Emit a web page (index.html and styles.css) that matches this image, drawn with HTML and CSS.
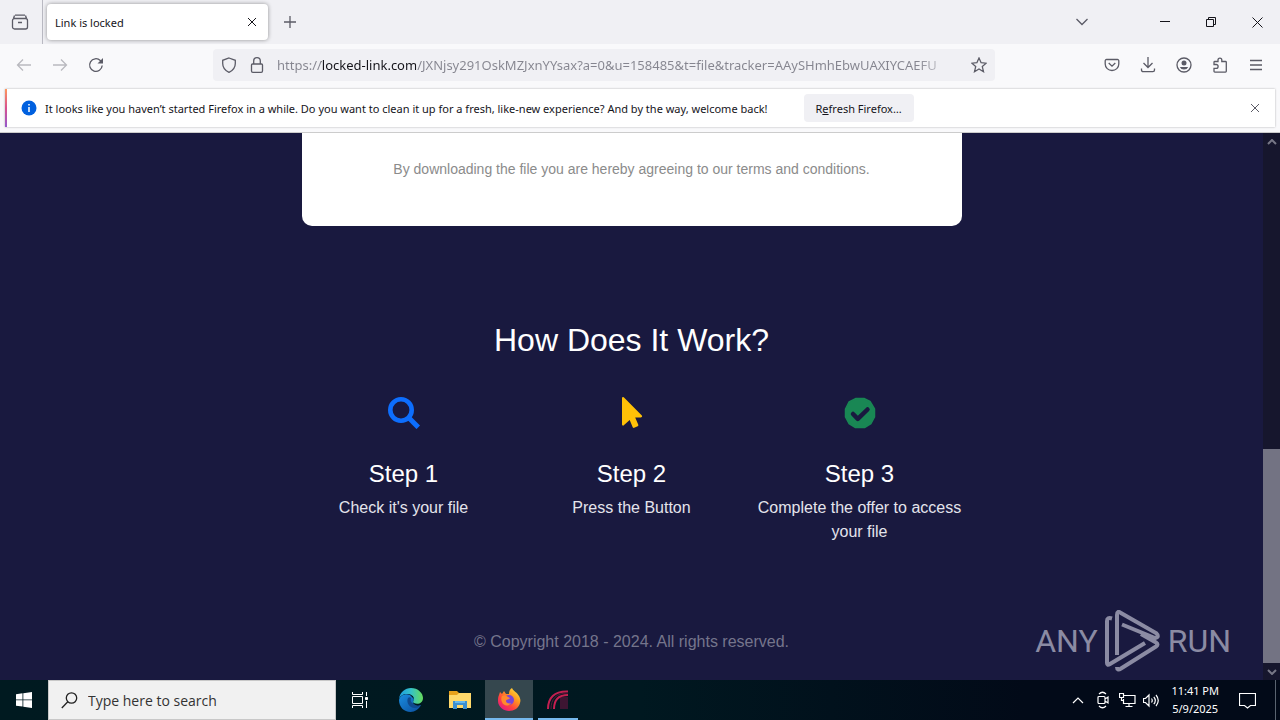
FILE: index.html
```html
<!DOCTYPE html>
<html lang="en">
<head>
  <meta charset="UTF-8">
  <meta name="viewport" content="width=device-width, initial-scale=1.0">
  <title>Link is locked</title>
  <link rel="stylesheet" href="styles.css">
</head>
<body>
  <header class="tabs">
    <button class="icon-btn view-btn" aria-label="Firefox View">
      <svg width="18" height="18" viewBox="0 0 18 18"><path d="M4 2.2h10M3.5 5.5h11a2 2 0 0 1 2 2v6.500a2 2 0 0 1-2 2h-11a2 2 0 0 1-2-2V7.500a2 2 0 0 1 2-2zM2.500 5.500l1-3M15.500 5.500l-1-3M7 9.500h4"/></svg>
    </button>
    <div class="tab">
      <span>Link is locked</span>
      <button class="icon-btn tab-close" aria-label="Close tab">
        <svg width="10" height="10" viewBox="0 0 10 10"><path d="M1 1l8 8M9 1L1 9"/></svg>
      </button>
    </div>
    <button class="icon-btn" aria-label="New tab">
      <svg width="14" height="14" viewBox="0 0 14 14"><path d="M7 1v12M1 7h12"/></svg>
    </button>
    <div class="window-btns">
      <button class="icon-btn all-tabs" aria-label="List all tabs">
        <svg width="14" height="8" viewBox="0 0 14 8"><path d="M1.500 1L7 6.500 12.500 1"/></svg>
      </button>
      <button class="icon-btn win" aria-label="Minimize">
        <svg width="10" height="10" viewBox="0 0 10 10"><path d="M0 4.500h10"/></svg>
      </button>
      <button class="icon-btn win" aria-label="Restore">
        <svg width="10" height="10" viewBox="0 0 10 10"><path d="M.5 2.500h7v7h-7zM2.500 2.500v-2h7v7h-2"/></svg>
      </button>
      <button class="icon-btn win" aria-label="Close">
        <svg width="11" height="11" viewBox="0 0 11 11"><path d="M.5.5l10 10M10.500.5l-10 10"/></svg>
      </button>
    </div>
  </header>

  <nav class="toolbar">
    <div class="nav-btns">
      <button class="icon-btn" aria-label="Back" disabled>
        <svg width="16" height="16" viewBox="0 0 16 16"><path d="M15 8H1.500M7 2.500L1.500 8 7 13.500"/></svg>
      </button>
      <button class="icon-btn" aria-label="Forward" disabled>
        <svg width="16" height="16" viewBox="0 0 16 16"><path d="M1 8h13.500M9 2.500L14.500 8 9 13.500"/></svg>
      </button>
      <button class="icon-btn" aria-label="Reload">
        <svg width="16" height="16" viewBox="0 0 16 16"><path d="M14.200 8.500A6.300 6.300 0 1 1 12.300 3.500L13.500 4.700"/><path class="solid" d="M15 1v5.500H9.500z"/></svg>
      </button>
    </div>
    <div class="urlbar">
      <svg width="16" height="16" viewBox="0 0 16 16"><path d="M8 1L14.300 3.300V6.500C14.300 10.500 12 13.500 8 15.300 4 13.500 1.700 10.500 1.700 6.500V3.300z"/></svg>
      <svg width="16" height="16" viewBox="0 0 16 16"><path d="M3.500 7h9a1 1 0 0 1 1 1v6a1.300 1.300 0 0 1-1.300 1.300H3.800A1.300 1.300 0 0 1 2.500 14V8a1 1 0 0 1 1-1zM4.700 7V4a3.300 3.300 0 0 1 6.600 0v3"/></svg>
      <input type="text" class="url" aria-label="Address" value="https://locked-link.com/JXNjsy291OskMZJxnYYsax?a=0&amp;u=158485&amp;t=file&amp;tracker=AAySHmhEbwUAXIYCAEFU">
      <button class="icon-btn star" aria-label="Bookmark this page">
        <svg width="16" height="16" viewBox="0 0 16 16"><path d="M8 1l2.100 4.700 5.100.5-3.900 3.400 1.200 5.100L8 12l-4.500 2.700 1.200-5.100L.8 6.200l5.100-.5z"/></svg>
      </button>
    </div>
    <div class="tool-btns">
      <button class="icon-btn" aria-label="Save to Pocket">
        <svg width="16" height="16" viewBox="0 0 16 16"><path d="M2.500 2.500h11a1.300 1.300 0 0 1 1.300 1.300V7a6.800 6.500 0 0 1-13.600 0V3.800A1.300 1.300 0 0 1 2.500 2.500zM4.700 6L8 9.200 11.300 6"/></svg>
      </button>
      <button class="icon-btn" aria-label="Downloads">
        <svg width="16" height="16" viewBox="0 0 16 16"><path d="M8 0v10M3.500 6L8 10.500 12.500 6M1.500 11.500v1.500a1.700 1.700 0 0 0 1.700 1.700h9.600a1.700 1.700 0 0 0 1.700-1.700v-1.500"/></svg>
      </button>
      <button class="icon-btn" aria-label="Account">
        <svg width="16" height="16" viewBox="0 0 16 16"><circle cx="8" cy="8" r="7"/><circle class="solid" cx="8" cy="6" r="2.500"/><path class="solid" d="M3.800 10h8.400a4.500 4 0 0 1-8.400 0z"/></svg>
      </button>
      <button class="icon-btn" aria-label="Extensions">
        <svg width="16" height="16" viewBox="0 0 16 16"><path d="M2 7.500V5.300a.8.8 0 0 1 .8-.8H6V3a1.900 1.900 0 0 1 3.800 0v1.500h3.700a.8.8 0 0 1 .8.8v9a.8.8 0 0 1-.8.8H2.800a.8.8 0 0 1-.8-.8v-3h2.200a1.900 1.900 0 0 0 0-3.800z"/></svg>
      </button>
      <button class="icon-btn" aria-label="Menu">
        <svg width="16" height="16" viewBox="0 0 16 16"><path d="M2 3.500h12M2 8h12M2 12.500h12"/></svg>
      </button>
    </div>
  </nav>

  <div class="notice-wrap">
    <div class="notice">
      <svg width="16" height="16" viewBox="0 0 16 16"><circle cx="8" cy="8" r="7.500" fill="#0060df"/><path d="M8 7v5M8 4v1.500" stroke="#fff" stroke-width="1.500"/></svg>
      <span>It looks like you haven’t started Firefox in a while. Do you want to clean it up for a fresh, like-new experience? And by the way, welcome back!</span>
      <button class="refresh">R<u>e</u>fresh Firefox…</button>
      <button class="icon-btn notice-close" aria-label="Close message">
        <svg width="10" height="10" viewBox="0 0 10 10"><path d="M1 1l8 8M9 1L1 9"/></svg>
      </button>
    </div>
  </div>

  <div class="viewport">
    <main class="page">
      <section class="card">
        <p>By downloading the file you are hereby agreeing to our terms and conditions.</p>
      </section>
      <h2>How Does It Work?</h2>
      <section class="steps">
        <div class="step">
          <svg width="32" height="32" viewBox="0 0 32 32" fill="none" stroke="#0d6efd"><circle cx="13" cy="13" r="10.700" stroke-width="4.600"/><path d="M21 21l9.300 9.300" stroke-width="5"/></svg>
          <h3>Step 1</h3>
          <p>Check it's your file</p>
        </div>
        <div class="step">
          <svg width="32" height="32" viewBox="0 0 32 32"><path fill="#ffc107" d="M6 1.200C6 0 7.200-.4 8 .4l17.600 17.800c1 1 .4 2.200-.8 2.200h-5.600l3.100 7.400c.2.6 0 1.200-.6 1.500l-3.500 1.500c-.6.2-1.200 0-1.500-.6l-3-7.200-5.900 5.300C7.200 29 6 28.500 6 27.500z"/></svg>
          <h3>Step 2</h3>
          <p>Press the Button</p>
        </div>
        <div class="step">
          <svg width="32" height="32" viewBox="0 0 32 32"><path fill="#198754" d="M12 1.500h8L26 4.500 30.500 12v8L27 26.500 20.500 30.500h-9L5 26.500 1.500 20v-8L5 5z" stroke="#198754" stroke-width="1.500" stroke-linejoin="round"/><path fill="none" stroke="#19193f" stroke-width="4.500" stroke-linejoin="round" stroke-linecap="round" d="M9 17l4.800 4.800L23.500 12.500"/></svg>
          <h3>Step 3</h3>
          <p>Complete the offer to access your file</p>
        </div>
      </section>
      <footer>© Copyright 2018 - 2024. All rights reserved.</footer>
    </main>
    <div class="scrollbar">
      <svg width="10" height="6" viewBox="0 0 10 6"><path d="M1 5l4-4 4 4"/></svg>
      <div class="thumb"></div>
      <svg width="10" height="6" viewBox="0 0 10 6"><path d="M1 1l4 4 4-4"/></svg>
    </div>
    <div class="watermark">
      <span>ANY</span>
      <svg width="56" height="62" viewBox="0 0 56 62"><path d="M7 8.500Q2 7 2 11V53Q2 56 5 54L40 33M12 45V5Q12 0 16 3L51 23Q55 27 50 28L17 14.500M36 24L51 32.500Q54 34.500 51 36.500L16 58.500Q12 61 12 57"/></svg>
      <span>RUN</span>
    </div>
  </div>

  <div class="taskbar">
    <button class="task start" aria-label="Start">
      <svg width="16" height="16" viewBox="0 0 16 16" fill="#fff"><path d="M0 2.200l6.500-.9v6.200H0zM7.300 1.200L16 0v7.500H7.300zM0 8.300h6.500v6.300L0 13.700zM7.300 8.300H16V16l-8.700-1.200z"/></svg>
    </button>
    <div class="search">
      <svg width="17" height="17" viewBox="0 0 17 17"><circle cx="10.500" cy="6" r="5.200"/><path d="M6.800 9.800L.8 16"/></svg>
      <input type="text" aria-label="Search" placeholder="Type here to search">
    </div>
    <button class="task" aria-label="Task View">
      <svg width="18" height="18" viewBox="0 0 18 18" fill="none" stroke="#fff"><path d="M1.500 1v2.500h10V1M1.500 17v-2.500h10V17M1.500 5.500h10v7h-10zM15.500 1v4M15.500 10v7"/><path fill="#fff" d="M14.500 6.500h2v2h-2z"/></svg>
    </button>
    <button class="task" aria-label="Microsoft Edge">
      <svg width="24" height="24" viewBox="0 0 24 24">
        <defs>
          <linearGradient id="edgeTop" x1="0" x2="1"><stop offset="0" stop-color="#1b9de2"/><stop offset=".5" stop-color="#35c1c8"/><stop offset="1" stop-color="#66dc5b"/></linearGradient>
          <linearGradient id="edgeLow" x1="0" x2="1" y2="1"><stop offset="0" stop-color="#1a8de0"/><stop offset="1" stop-color="#0b4f9f"/></linearGradient>
        </defs>
        <path fill="url(#edgeLow)" d="M0 12C1 7 7 5 11 7l4 4-1 4c2 4 6 3 8 2-2 4-6 7-10.500 7C5 24 0 19 0 12z"/>
        <path fill="url(#edgeTop)" d="M0 11C1 4 6 0 12 0c7 0 12 5 12 10 0 5-5 7-9 5-2-1 0-2 0-4 0-3-3-5-7-5-4 0-7 2-8 5z"/>
        <path fill="#104a8e" d="M9 10c-2 4 1 10 7 10 3 0 5-2 6-3-2 1-5 1-7-1-3-1-4-3-3-6-1-1-2-1-3 0z"/>
      </svg>
    </button>
    <button class="task" aria-label="File Explorer">
      <svg width="22" height="20" viewBox="0 0 22 20"><path fill="#e8a21c" d="M0 1h8l2 2h12v7H0z"/><path fill="#ffd96b" d="M0 5h8l2-2h12v15H0z"/><path fill="#3c8fd0" d="M4 11h14v8h-4v-4H8v4H4z"/><path fill="#65b8ee" d="M6 11h10v2H6z"/></svg>
    </button>
    <button class="task active" aria-label="Firefox">
      <svg width="24" height="24" viewBox="0 0 24 24">
        <defs><linearGradient id="fox" x1="1" y1="0" x2=".2" y2="1"><stop offset="0" stop-color="#fff24a"/><stop offset=".4" stop-color="#ff9a1f"/><stop offset=".7" stop-color="#ff423f"/><stop offset="1" stop-color="#e31587"/></linearGradient></defs>
        <path fill="url(#fox)" d="M2 7l1-3 2 2 2-3 2 3h3c0-3 1-5 3-6 1 3 5 4 7 8 1 2 2 4 1 7-1 5-6 8-11 8S1 19 1 13c0-2 0-4 1-6z"/>
        <circle cx="12" cy="12" r="5" fill="#7a45d6"/>
        <path fill="#ff8a2c" d="M5 8c2-1 4-1 6 1l2 1c-1 2-4 1-4 3 0 2 3 3 5 2-2 4-8 3-9-1-1-2-1-4 0-6z"/>
      </svg>
    </button>
    <button class="task running" aria-label="ANY.RUN">
      <svg width="22" height="20" viewBox="0 0 22 20" fill="none"><path fill="#3d1532" d="M13 7h8v12h-8z"/><path stroke="#c41f51" stroke-width="2" d="M1 19C1 8 7 1 21 1.500M7 19C7 10 11 5 21 5"/><path stroke="#5c1838" d="M4 19C4 9 9 3 21 3"/></svg>
    </button>
    <div class="tray">
      <svg width="12" height="7" viewBox="0 0 12 7"><path d="M1 6l5-5 5 5"/></svg>
      <svg class="meet" width="12" height="18" viewBox="0 0 12 18"><path d="M2 3Q5.500-.5 9 3M2 15Q5.500 18.500 9 15M2 5.500h5a1 1 0 0 1 1 1v5a1 1 0 0 1-1 1H2a1 1 0 0 1-1-1v-5a1 1 0 0 1 1-1zM8 8l3-2v6L8 10"/></svg>
      <svg width="17" height="15" viewBox="0 0 17 15"><path d="M5 2.500h11v8H4.500V6M10 10.500v3M6.500 13.500h7M.5.500h4v4h-4zM2.500 4.500v3h2"/></svg>
      <svg class="sound" width="17" height="15" viewBox="0 0 17 15"><path d="M.5 5.500h2L6 2v11L2.500 9.500h-2zM8.500 5.500q1.500 2 0 4M10.800 3.800q3 3.700 0 7.400M13 2q4.500 5.500 0 11"/></svg>
      <div class="clock"><span>11:41 PM</span><span>5/9/2025</span></div>
      <svg class="action" width="17" height="17" viewBox="0 0 17 17"><path d="M.5 1.500h16v12h-5L8.500 16l-3-2.500h-5z"/></svg>
      <div class="peek"></div>
    </div>
  </div>
</body>
</html>
```
FILE: styles.css
```css
* {
  box-sizing: border-box;
}

body {
  margin: 0;
  height: 100vh;
  display: flex;
  flex-direction: column;
  overflow: hidden;
  font-family: "Noto Sans", "Open Sans", sans-serif;
  font-size: 11px;
  color: #15141a;
  background: #f9f9fb;
}

button {
  font: inherit;
  color: inherit;
  border: none;
  background: none;
  padding: 0;
}

svg {
  display: block;
  flex: none;
}

.icon-btn {
  display: flex;
  align-items: center;
  justify-content: center;
}

.icon-btn svg,
.urlbar svg {
  fill: none;
  stroke: #5b5b66;
  stroke-width: 1.3;
}

.icon-btn .solid {
  fill: #5b5b66;
  stroke: none;
}

.icon-btn:disabled {
  opacity: 0.4;
}

/* Tab strip */
.tabs {
  height: 44px;
  flex: none;
  display: flex;
  align-items: center;
  background: #f0f0f4;
}

.view-btn {
  width: 43px;
  height: 44px;
  padding-right: 2px;
  border-right: 1px solid #b9b9c2;
}

.tab {
  width: 221px;
  height: 36px;
  margin: 0 15px 0 4px;
  padding: 0 11px 0 8px;
  display: flex;
  align-items: center;
  justify-content: space-between;
  background: #fff;
  border-radius: 4px;
  box-shadow: 0 0 4px rgba(0, 0, 0, 0.4);
}

.icon-btn.tab-close svg,
.icon-btn.win svg {
  stroke: #15141a;
  stroke-width: 1;
}

.window-btns {
  display: flex;
  margin-left: auto;
}

.window-btns .win {
  width: 46px;
}

.all-tabs {
  margin-right: 53px;
}

/* Toolbar */
.toolbar {
  height: 41px;
  flex: none;
  display: flex;
  align-items: center;
  justify-content: space-between;
  padding: 0 16px;
}

.nav-btns,
.tool-btns {
  display: flex;
  gap: 20px;
}

.urlbar {
  flex: 0 1 782px;
  height: 32px;
  padding: 0 8px;
  display: flex;
  align-items: center;
  gap: 12px;
  background: #f0f0f4;
  border-radius: 4px;
}

/* host part is dark, the rest is dimmed and fades out on the right */
.url {
  flex: 1;
  min-width: 0;
  margin-right: -6px;
  padding: 0;
  border: none;
  outline: none;
  font: 13px "Noto Sans", "Open Sans", sans-serif;
  color: transparent;
  background: linear-gradient(to right, #85858f 44px, #15141a 44px, #15141a 139px, #85858f 139px, #85858f 640px, transparent 680px);
  -webkit-background-clip: text;
  background-clip: text;
}

/* Notification bar */
.notice-wrap {
  flex: none;
  padding: 4px 5px 5px;
  border-bottom: 1px solid #ccc;
}

.notice {
  height: 38px;
  display: flex;
  align-items: center;
  padding: 0 15px 0 14px;
  gap: 8px;
  background: #fff;
  border-left: 2px solid;
  border-image: linear-gradient(#ff9a5a, #d8508f, #9059d0) 1;
  box-shadow: 0 0 2px rgba(0, 0, 0, 0.3);
}

.refresh {
  height: 28px;
  margin-left: 28px;
  padding: 0 12px;
  background: #f0f0f4;
  border-radius: 4px;
}

.notice-close {
  margin-left: auto;
}

.icon-btn.notice-close svg {
  stroke-width: 1;
}

/* Page */
.viewport {
  flex: 1;
  min-height: 0;
  display: flex;
  position: relative;
  background: #19193f;
}

.page {
  flex: 1;
  font-family: "Liberation Sans", Arial, sans-serif;
  font-size: 16px;
  line-height: 24px;
  text-align: center;
  color: #fff;
}

.page p {
  margin: 0;
}

.card {
  max-width: 660px;
  margin: 0 auto 95px;
  padding: 24px 24px 45px;
  background: #fff;
  color: #8b8b8b;
  font-size: 14px;
  border-radius: 0 0 10px 10px;
}

.page h2 {
  margin: 0 0 38px;
  font-size: 32px;
  font-weight: 400;
  line-height: 38px;
}

.steps {
  max-width: 684px;
  margin: 0 auto;
  display: grid;
  grid-template-columns: repeat(3, 1fr);
}

.step {
  padding: 0 12px;
}

.step svg {
  margin: 0 auto 31px;
}

.step h3 {
  margin: 0 0 8px;
  font-size: 24px;
  font-weight: 400;
  line-height: 28px;
}

.step p {
  color: #e4e4ec;
}

.page footer {
  margin-top: 86px;
  color: #75758c;
}

.scrollbar {
  width: 17px;
  display: flex;
  flex-direction: column;
  align-items: center;
  padding: 6px 0 5px;
  background: #16162d;
}

.scrollbar svg {
  fill: none;
  stroke: #777786;
  stroke-width: 2;
}

.thumb {
  width: 100%;
  height: 214px;
  margin: auto 0 6px;
  background: #737383;
}

.watermark {
  position: absolute;
  right: 49px;
  bottom: 8px;
  display: flex;
  align-items: center;
  gap: 7px;
  font: 32px Roboto, sans-serif;
  color: #8b8ba3;
}

.watermark svg {
  fill: none;
  stroke: #8b8ba3;
  stroke-width: 4;
}

/* Taskbar */
.taskbar {
  height: 40px;
  flex: none;
  display: flex;
  background: linear-gradient(to right, #001a20, #001820 50%, #020a18 80%);
  color: #fff;
}

.task {
  width: 48px;
  height: 40px;
  margin-right: 1px;
  display: flex;
  align-items: center;
  justify-content: center;
}

.task.start {
  margin: 0;
}

.task.active {
  background: #35474e;
  border-bottom: 2px solid #76b9ed;
  padding-top: 2px;
}

.task.running {
  width: 40px;
  margin-left: 4px;
  border-bottom: 2px solid #76b9ed;
  padding-top: 2px;
}

.search {
  width: 288px;
  padding: 0 12px;
  display: flex;
  align-items: center;
  gap: 10px;
  background: #f1f1f1;
  border: 1px solid #c8c8c8;
}

.search svg {
  fill: none;
  stroke: #222;
  stroke-width: 1.3;
}

.search input {
  flex: 1;
  min-width: 0;
  padding: 0;
  border: none;
  outline: none;
  background: none;
  font: 14px "Open Sans", "Noto Sans", sans-serif;
}

.search input::placeholder {
  color: #333;
}

.search + .task {
  margin-right: 3px;
}

.tray {
  margin-left: auto;
  display: flex;
  align-items: center;
}

.tray svg {
  fill: none;
  stroke: #fff;
  stroke-width: 1.2;
}

.tray .meet {
  margin: 0 10px 0 13px;
}

.tray .sound {
  margin: 0 11px 0 7px;
}

.clock {
  display: flex;
  flex-direction: column;
  text-align: center;
  line-height: 18px;
}

.tray .action {
  margin: 0 19px 0 20px;
}

.peek {
  width: 5px;
  height: 40px;
  border-left: 1px solid #5a6470;
}
```
